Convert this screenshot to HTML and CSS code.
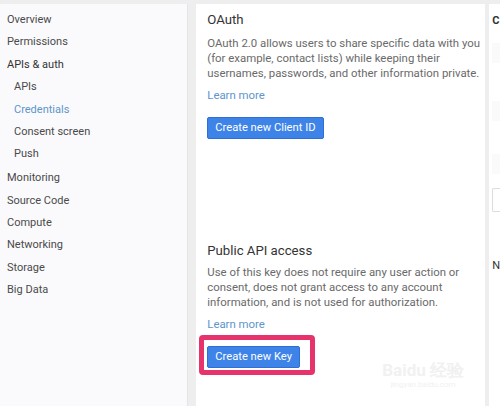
FILE: index.html
```html
<!DOCTYPE html>
<html>
<head>
<meta charset="utf-8">
<link rel="stylesheet" href="styles.css">
</head>
<body>
<div class="page">
  <nav class="sidebar">
    <a class="item">Overview</a>
    <a class="item">Permissions</a>
    <a class="item group">APIs &amp; auth</a>
    <a class="item sub">APIs</a>
    <a class="item sub active">Credentials</a>
    <a class="item sub">Consent screen</a>
    <a class="item sub">Push</a>
    <a class="item gap">Monitoring</a>
    <a class="item">Source Code</a>
    <a class="item">Compute</a>
    <a class="item">Networking</a>
    <a class="item">Storage</a>
    <a class="item">Big Data</a>
  </nav>
  <main class="card">
    <section class="block">
      <h2 class="title">OAuth</h2>
      <p class="desc">OAuth 2.0 allows users to share specific data with you (for example, contact lists) while keeping their usernames, passwords, and other information private.</p>
      <a class="link">Learn more</a>
      <div class="btn-wrap"><button class="btn">Create new Client ID</button></div>
    </section>
    <section class="block second">
      <h2 class="title">Public API access</h2>
      <p class="desc">Use of this key does not require any user action or consent, does not grant access to any account information, and is not used for authorization.</p>
      <a class="link">Learn more</a>
      <div class="btn-wrap highlighted"><button class="btn">Create new Key</button></div>
    </section>
    <div class="watermark"><span class="wm-logo">Bai<span class="paw">du</span> 经验</span><span class="wm-url">jingyan.baidu.com</span></div>
  </main>
  <aside class="side">
    <div class="side-h">C</div>
    <div class="ghost g1"></div>
    <div class="ghost g2"></div>
    <div class="ghost g3"></div>
    <div class="ghost-box"></div>
    <div class="side-h n">N</div>
  </aside>
</div>
</body>
</html>
```
FILE: styles.css
```css
*, *::before, *::after { box-sizing: border-box; margin: 0; padding: 0; }
html, body { width: 500px; height: 406px; overflow: hidden; }
body {
  background: #eeeeef;
  font-family: Roboto, "Noto Sans", "Liberation Sans", sans-serif;
}
.page {
  display: flex;
  padding-top: 4px;
  height: 406px;
}
.sidebar {
  width: 189px;
  background: #fafafc;
  padding-top: 5px;
  display: flex;
  flex-direction: column;
  border-right: 1px solid #e4e4e6;
}
.item {
  display: block;
  font-size: 11px;
  line-height: 22.4px;
  height: 22.4px;
  color: #4a4a4a;
  padding-left: 7px;
}
.item.group { color: #333; }
.item.sub { padding-left: 14px; }
.item.active { color: #5d95cc; }
.item.gap { margin-top: 1.5px; }
.card {
  position: relative;
  width: 290px;
  margin-left: 8px;
  background: #fff;
  padding: 7px 3px 0 11px;
}
.title {
  font-size: 13.2px;
  font-weight: 400;
  line-height: 18px;
  color: #333;
}
.desc {
  margin-top: 7px;
  font-size: 11.4px;
  line-height: 15px;
  color: #6a6a6a;
}
.link {
  display: block;
  margin-top: 7px;
  font-size: 11.4px;
  line-height: 15px;
  color: #5d95cc;
}
.btn-wrap {
  position: relative;
  margin-top: 14px;
  display: flex;
}
.btn {
  position: relative;
  z-index: 1;
  height: 22px;
  padding: 0 7px;
  border: 1px solid #2f6fd4;
  border-radius: 2px;
  background: #3d83e8;
  color: #fff;
  font-family: inherit;
  font-size: 11.2px;
  line-height: 20px;
}
.second { margin-top: 103px; }
.second .desc { margin-top: 5px; }
.highlighted::before {
  content: "";
  position: absolute;
  left: -8px;
  top: -11px;
  width: 116px;
  height: 40px;
  border: 5px solid #e6336c;
  border-radius: 4px;
  background: #fff;
}
.watermark {
  position: absolute;
  left: 186px;
  top: 356px;
  display: flex;
  flex-direction: column;
  align-items: center;
  color: #f1f1f1;
  pointer-events: none;
}
.wm-logo { font-size: 17px; font-weight: 700; line-height: 20px; }
.wm-url { font-size: 8px; line-height: 10px; }
.side {
  flex: 1;
  margin-left: 4px;
  background: #fff;
  padding: 11px 0 0 3px;
  display: flex;
  flex-direction: column;
}
.side-h {
  font-size: 11px;
  font-weight: 700;
  line-height: 12px;
  color: #333;
}
.ghost {
  margin-top: 16px;
  height: 20px;
  background: #fafafa;
}
.g2 { margin-top: 38px; }
.g3 { margin-top: 33px; }
.ghost-box {
  margin-top: 14px;
  height: 24px;
  border: 1px solid #dcdcdc;
  border-right: none;
  border-radius: 2px 0 0 2px;
}
.n { margin-top: 48px; font-weight: 400; }
```
